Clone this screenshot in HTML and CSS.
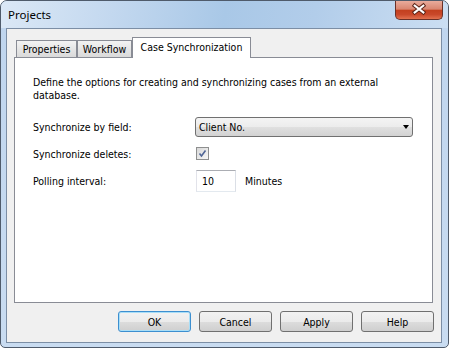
FILE: index.html
```html
<!DOCTYPE html>
<html lang="en">
<head>
  <meta charset="UTF-8" />
  <title>Projects</title>
  <link rel="stylesheet" href="styles.css">
</head>
<body>
  <div class="window">
    <div class="titlebar">
      <span class="title">Projects</span>
      <button class="close" title="Close">
        <svg width="48" height="18" viewBox="0 0 48 18">
          <path d="M19.5 4.5 L28.5 11.5 M28.5 4.5 L19.5 11.5" stroke="#5b2417" stroke-width="4.2" stroke-linecap="square" fill="none"/>
          <path d="M19.5 4.5 L28.5 11.5 M28.5 4.5 L19.5 11.5" stroke="#fff" stroke-width="2.2" stroke-linecap="square" fill="none"/>
        </svg>
      </button>
    </div>

    <div class="client">
      <div class="tabs">
        <div class="tab tab-props">Properties</div>
        <div class="tab tab-flow">Workflow</div>
        <div class="tab tab-sync active">Case Synchronization</div>
      </div>

      <div class="panel">
        <p class="intro">Define the options for creating and synchronizing cases from an external database.</p>

        <div class="form">
          <label>Synchronize by field:</label>
          <div class="combo">
            <span>Client No.</span>
            <span class="arrow"></span>
          </div>

          <label>Synchronize deletes:</label>
          <div>
            <span class="check">
              <svg width="11" height="11" viewBox="0 0 11 11">
                <path d="M2.5 5.5 L4.5 8 L8.5 2.5" stroke="#4f6596" stroke-width="1.6" fill="none"/>
              </svg>
            </span>
          </div>

          <label>Polling interval:</label>
          <div class="interval">
            <span class="field">10</span>
            <span class="unit">Minutes</span>
          </div>
        </div>
      </div>

      <div class="buttons">
        <button class="btn btn-default">OK</button>
        <button class="btn">Cancel</button>
        <button class="btn">Apply</button>
        <button class="btn">Help</button>
      </div>
    </div>
  </div>
</body>
</html>
```

FILE: styles.css
```css
* {
  box-sizing: border-box;
}
body {
  margin: 0;
  font-family: "DejaVu Sans Condensed", "DejaVu Sans", sans-serif;
  font-size: 10.5px;
  color: #000;
  background: #fff;
}
.window {
  width: 449px;
  height: 348px;
  border: 1px solid #4f5b6b;
  border-radius: 7px 7px 5px 5px;
  background: linear-gradient(to bottom, #bfd5ee, #c9dcf1);
  padding: 0 6px 4px 5px;
  display: flex;
  flex-direction: column;
  overflow: hidden;
}
.titlebar {
  height: 27px;
  margin: 0 -6px 0 -5px;
  padding: 0 5px 0 7px;
  display: flex;
  align-items: flex-start;
  background: linear-gradient(100deg, #dbe8f6 0%, #c3d8ef 25%, #a9c8e7 50%, #b2cdea 70%, #cbdef2 100%);
}
.title {
  flex: 1;
  font-family: "Noto Sans", sans-serif;
  font-size: 11.5px;
  line-height: 16px;
  margin-top: 6px;
}
.close {
  width: 48px;
  height: 19px;
  padding: 0;
  border: 1px solid #6a3128;
  border-top: none;
  border-radius: 0 0 5px 5px;
  background: linear-gradient(to bottom, #e9ab9c 0%, #d98670 45%, #c3401f 52%, #c9482a 75%, #e2714f 100%);
  display: flex;
  align-items: center;
  justify-content: center;
}
.client {
  flex: 1;
  border: 1px solid #7c8ea5;
  background: #f0f0f0;
  padding: 8px 8px 0 7px;
  display: flex;
  flex-direction: column;
}
.tabs {
  display: flex;
  align-items: flex-end;
  height: 20px;
  padding-left: 2px;
}
.tab {
  height: 17px;
  border: 1px solid #898c95;
  border-bottom: none;
  background: linear-gradient(to bottom, #f3f3f3, #e6e6e6 50%, #dadada);
  line-height: 16px;
  text-align: center;
  white-space: nowrap;
}
.tab-props {
  width: 61px;
}
.tab-flow {
  width: 55px;
}
.tab-sync {
  width: 119px;
}
.tab.active {
  position: relative;
  z-index: 1;
  height: 21px;
  margin-bottom: -1px;
  background: #fff;
  line-height: 19px;
}
.panel {
  height: 246px;
  border: 1px solid #898c95;
  background: #fff;
  padding: 18px 18px 0 18px;
}
.intro {
  margin: 0;
  max-width: 370px;
  line-height: 13px;
}
.form {
  display: grid;
  grid-template-columns: 162px 218px;
  grid-template-rows: 20px 21px 22px;
  row-gap: 6px;
  margin-top: 15px;
  align-items: center;
}
.combo {
  height: 20px;
  border: 1px solid #707070;
  border-radius: 3px;
  background: linear-gradient(to bottom, #f4f4f4 0%, #ececec 50%, #e0e0e0 51%, #d2d2d2 100%);
  display: flex;
  align-items: center;
  justify-content: space-between;
  padding: 0 2px 0 3px;
}
.arrow {
  width: 0;
  height: 0;
  border-left: 3.5px solid transparent;
  border-right: 3.5px solid transparent;
  border-top: 4px solid #000;
  margin-right: 1px;
}
.check {
  display: flex;
  width: 13px;
  height: 13px;
  margin-left: 1px;
  border: 1px solid #8e8f8f;
  background: linear-gradient(135deg, #d8d8d8, #f7f7f7);
}
.interval {
  display: flex;
  align-items: center;
}
.field {
  width: 40px;
  height: 22px;
  margin-left: 1px;
  border: 1px solid #abadb3;
  border-color: #abadb3 #dbdfe6 #e3e9ef #e2e3ea;
  background: #fff;
  padding-left: 5px;
  line-height: 20px;
}
.unit {
  margin-left: 9px;
}
.buttons {
  display: flex;
  justify-content: flex-end;
  gap: 8px;
  margin-top: 8px;
  margin-right: -1px;
}
.btn {
  width: 73px;
  height: 21px;
  padding: 0;
  border: 1px solid #707070;
  border-radius: 3px;
  background: linear-gradient(to bottom, #f2f2f2 0%, #ebebeb 50%, #dddddd 51%, #cfcfcf 100%);
  font-family: inherit;
  font-size: inherit;
  color: #000;
}
.btn-default {
  border-color: #3c8fd0;
  box-shadow: inset 0 0 0 1px #a9def7;
}
```
